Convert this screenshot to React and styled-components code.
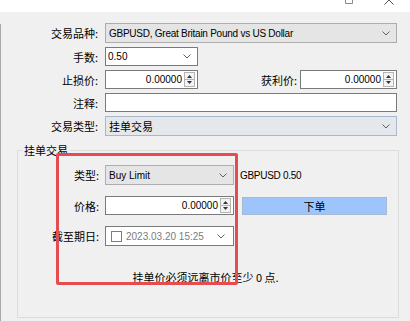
import React from 'react';
import styled, { createGlobalStyle } from 'styled-components';

const GlobalStyle = createGlobalStyle`
  html, body { margin: 0; padding: 0; background: #f0f0f0; }
  body {
    font-family: "Liberation Sans", "Noto Sans CJK SC", sans-serif;
    font-size: 10px;
    color: #000;
  }
  * { box-sizing: border-box; }
`;

const cjk = `"Noto Sans CJK SC", "Liberation Sans", sans-serif`;

const Window = styled.div`
  width: 410px;
  height: 321px;
  overflow: hidden;
  display: flex;
  flex-direction: column;
  background: #f0f0f0;
`;

const TitleBar = styled.div`
  height: 12px;
  flex-shrink: 0;
  background: #fff;
  display: flex;
  justify-content: flex-end;
  align-items: flex-start;
  gap: 31px;
  padding-right: 16px;
`;

const Body = styled.div`
  flex: 1;
  display: flex;
  min-height: 0;
`;

const Strip = styled.div`
  width: 8px;
  margin-top: 12px;
  background: #fff;
  border-top: 1px solid #a9a9a9;
  border-right: 1px solid #a9a9a9;
  overflow: hidden;
  display: flex;
  flex-direction: column;
`;

const Tick = styled.div`
  height: 10px;
  line-height: 10px;
  margin-top: ${p => p.$gap}px;
  display: flex;
  justify-content: flex-end;
  padding-right: 2px;
  white-space: nowrap;
  font-size: 9px;
  background: ${p => (p.$tone === 'red' ? '#e64b4b' : p.$tone === 'blue' ? '#0a74d6' : 'transparent')};
  color: ${p => (p.$tone ? '#fff' : '#000')};
`;

const Main = styled.div`
  flex: 1;
  display: flex;
  flex-direction: column;
  padding: 11px 12px 3px 8px;
`;

const Form = styled.div`
  display: grid;
  grid-template-columns: 89px 1fr;
  grid-template-rows: 20px 19px 19px 19px 20px;
  column-gap: 7px;
  row-gap: 4px;
  margin-right: 2px;
`;

const Label = styled.div`
  font-family: ${cjk};
  font-size: 11px;
  line-height: 14px;
  text-align: right;
  align-self: center;
  white-space: nowrap;
`;

const Select = styled.div`
  height: 100%;
  width: ${p => (p.$w ? `${p.$w}px` : 'auto')};
  display: flex;
  align-items: center;
  justify-content: space-between;
  padding: 0 6px 0 ${p => (p.$variant === 'white' ? 2 : 3)}px;
  border: 1px solid ${p => (p.$variant === 'white' ? '#7a7a7a' : p.$variant === 'blue' ? '#a8b8ca' : '#adadad')};
  background: ${p => (p.$variant === 'white' ? '#fff' : p.$variant === 'blue' ? '#e4e7eb' : '#e5e5e5')};
  white-space: nowrap;
  overflow: hidden;
`;

const SelectText = styled.span`
  font-family: ${p => (p.$cjk ? cjk : `"Liberation Sans", sans-serif`)};
  font-size: ${p => (p.$cjk ? 11 : 10)}px;
  letter-spacing: ${p => p.$tight ? '-0.25px' : '0'};
`;

const TextBox = styled.div`
  height: 100%;
  border: 1px solid #7a7a7a;
  background: #fff;
`;

const SpinRow = styled.div`
  display: flex;
  align-items: center;
  height: 100%;
`;

const SpinBox = styled.div`
  width: ${p => p.$w}px;
  height: 100%;
  display: flex;
  align-items: center;
  border: 1px solid #7a7a7a;
  background: #fff;
  padding-right: 2px;
`;

const SpinValue = styled.span`
  flex: 1;
  text-align: right;
  padding-right: 2px;
  font-size: 10px;
`;

const SideLabel = styled(Label)`
  margin-left: auto;
  margin-right: 3px;
`;

const GroupWrap = styled.div`
  position: relative;
  flex: 1;
  display: flex;
  margin: 7px 0 0 8px;
`;

const Group = styled.fieldset`
  flex: 1;
  margin: 0;
  min-width: 0;
  border: 1px solid #dcdcdc;
  padding: 8px 11px 0 0;
`;

const Legend = styled.legend`
  font-family: ${cjk};
  font-size: 11px;
  line-height: 14px;
  padding: 0 2px;
  margin-left: 4px;
`;

const GroupGrid = styled.div`
  display: grid;
  grid-template-columns: 81px 129px 1fr;
  grid-template-rows: 20px 19px 20px;
  column-gap: 6px;
  row-gap: 11px;
`;

const Info = styled.div`
  align-self: center;
  font-size: 10px;
  letter-spacing: -0.3px;
  white-space: nowrap;
`;

const OrderButton = styled.div`
  margin-left: 2px;
  width: 145px;
  height: 18px;
  align-self: center;
  display: flex;
  align-items: center;
  justify-content: center;
  border: 1px solid #a6bad4;
  background: #9ec4fc;
  font-family: ${cjk};
  font-size: 11px;
`;

const DateBox = styled.div`
  height: 100%;
  display: flex;
  align-items: center;
  border: 1px solid #7a7a7a;
  background: #fff;
  padding: 0 8px 0 5px;
`;

const Check = styled.span`
  width: 11px;
  height: 11px;
  border: 1px solid #4f87c6;
  background: #fff;
  flex-shrink: 0;
`;

const DateText = styled.span`
  flex: 1;
  margin-left: 4px;
  color: #7c7c7c;
  font-size: 10px;
  white-space: nowrap;
`;

const Note = styled.div`
  margin-top: 24px;
  padding-left: 6px;
  text-align: center;
  font-family: ${cjk};
  font-size: 11px;
  line-height: 14px;
`;

const Highlight = styled.div`
  position: absolute;
  left: 39px;
  top: 10px;
  width: 182px;
  height: 132px;
  border: 3px solid #e64c4f;
  border-radius: 2px;
  pointer-events: none;
`;

const Chevron = () => (
  <svg width="8" height="5" viewBox="0 0 8 5">
    <path d="M0.5 0.5 L4 4 L7.5 0.5" fill="none" stroke="#606060" strokeWidth="1" />
  </svg>
);

const Spin = () => (
  <svg width="11" height="15" viewBox="0 0 11 15">
    <rect x="0.5" y="0.5" width="10" height="14" fill="#f3f3f3" stroke="#b4b4b4" />
    <line x1="1" y1="7.5" x2="10" y2="7.5" stroke="#b4b4b4" />
    <path d="M3 6 L5.5 3 L8 6 Z" fill="#333" />
    <path d="M3 9 L5.5 12 L8 9 Z" fill="#333" />
  </svg>
);

const MaxIcon = () => (
  <svg width="8" height="4" viewBox="0 0 8 4">
    <path d="M0.5 -1 V3.5 H7.5 V-1" fill="none" stroke="#8a8a8a" />
  </svg>
);

const CloseIcon = () => (
  <svg width="10" height="5" viewBox="0 0 10 5">
    <path d="M0.5 4.5 L6 -1 M9.5 4.5 L4 -1" fill="none" stroke="#555" strokeWidth="1" />
  </svg>
);

const ticks = [
  { t: '8', gap: 25 },
  { t: '8', gap: 18 },
  { t: '8', gap: 19 },
  { t: '4', gap: 20 },
  { t: '2', gap: 0, tone: 'red' },
  { t: '9', gap: 8 },
  { t: '4', gap: 19 },
  { t: '0', gap: 19 },
  { t: '5', gap: 19 },
  { t: '0', gap: 23, tone: 'blue' },
  { t: '5', gap: 11 },
];

export default function App() {
  return (
    <>
      <GlobalStyle />
      <Window>
        <TitleBar>
          <MaxIcon />
          <CloseIcon />
        </TitleBar>
        <Body>
          <Strip>
            {ticks.map((k, i) => (
              <Tick key={i} $gap={k.gap} $tone={k.tone}>{k.t}</Tick>
            ))}
          </Strip>
          <Main>
            <Form>
              <Label>交易品种:</Label>
              <Select $variant="grey">
                <SelectText $tight>GBPUSD, Great Britain Pound vs US Dollar</SelectText>
                <Chevron />
              </Select>

              <Label>手数:</Label>
              <Select $variant="white" $w={93}>
                <SelectText>0.50</SelectText>
                <Chevron />
              </Select>

              <Label>止损价:</Label>
              <SpinRow>
                <SpinBox $w={93}>
                  <SpinValue>0.00000</SpinValue>
                  <Spin />
                </SpinBox>
                <SideLabel>获利价:</SideLabel>
                <SpinBox $w={97}>
                  <SpinValue>0.00000</SpinValue>
                  <Spin />
                </SpinBox>
              </SpinRow>

              <Label>注释:</Label>
              <TextBox />

              <Label>交易类型:</Label>
              <Select $variant="blue">
                <SelectText $cjk>挂单交易</SelectText>
                <Chevron />
              </Select>
            </Form>

            <GroupWrap>
              <Group>
                <Legend>挂单交易</Legend>
                <GroupGrid>
                  <Label>类型:</Label>
                  <Select $variant="grey">
                    <SelectText>Buy Limit</SelectText>
                    <Chevron />
                  </Select>
                  <Info>GBPUSD 0.50</Info>

                  <Label>价格:</Label>
                  <SpinBox $w={129}>
                    <SpinValue>0.00000</SpinValue>
                    <Spin />
                  </SpinBox>
                  <OrderButton>下单</OrderButton>

                  <Label>截至期日:</Label>
                  <DateBox>
                    <Check />
                    <DateText>2023.03.20 15:25</DateText>
                    <Chevron />
                  </DateBox>
                  <span />
                </GroupGrid>
                <Note>挂单价必须远离市价至少 0 点.</Note>
              </Group>
              <Highlight />
            </GroupWrap>
          </Main>
        </Body>
      </Window>
    </>
  );
}
